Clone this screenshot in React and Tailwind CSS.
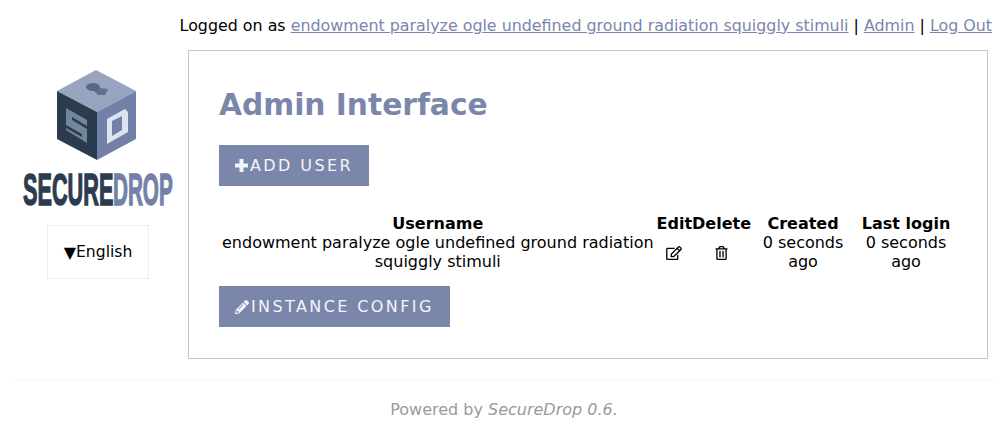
import React from 'react';
import { FaPencilAlt, FaRegEdit, FaRegTrashAlt } from 'react-icons/fa';

const linkClass = 'text-[#7b86ab] underline';

const Logo = () => (
    <svg width="152" height="138" viewBox="0 0 152 138" className="block overflow-visible">
        {/* cube */}
        <polygon points="74,1 114,22 75,43 35,22" fill="#97a3bf" />
        <polygon points="35,22 75,43 75,91 35,70" fill="#2a3c4e" />
        <polygon points="75,43 114,22 114,70 75,91" fill="#7381a8" />
        {/* keyhole */}
        <polygon points="68,18 78,19 86,20 83,26 76,26 72,22" fill="#5e6f8f" />
        <ellipse cx="71" cy="18" rx="7" ry="4" fill="#56678a" />
        {/* S face */}
        <polygon points="44,39 65,51 65,74 44,61" fill="#71879c" />
        <polygon points="50,48 65,57 65,60 50,51" fill="#2a3c4e" />
        <polygon points="44,56 60,65 60,68 44,59" fill="#2a3c4e" />
        {/* D face */}
        <polygon points="85,50 103,40 106,43 106,63 85,75" fill="#dde3f0" />
        <polygon points="90,52 100,47 100,61 90,67" fill="#7381a8" />
        {/* wordmark */}
        <text transform="translate(1 136) scale(0.493 1)" fontFamily="'Liberation Sans', sans-serif" fontWeight="700" fontSize="44" fill="#2a3c4e" stroke="#2a3c4e" strokeWidth="1.4">SECURE</text>
        <text transform="translate(91 136) scale(0.47 1)" fontFamily="'Liberation Sans', sans-serif" fontWeight="700" fontSize="44" fill="#7381a8" stroke="#7381a8" strokeWidth="1.4">DROP</text>
    </svg>
);

const PlusIcon = () => (
    <svg width="13" height="13" viewBox="0 0 13 13" className="mr-[2px]">
        <path d="M4.5 0h4v4.5H13v4H8.5V13h-4V8.5H0v-4h4.5z" fill="currentColor" />
    </svg>
);

const AdminButton = ({ icon, label }) => (
    <a className="flex w-fit items-center h-[41px] px-4 bg-[#7b86ab] text-[#f4f5f8] text-[16px] tracking-[2.4px] uppercase">
        {icon}
        {label}
    </a>
);

const App = () => {
    return (
        <div className="w-[1008px] h-[434px] overflow-hidden bg-white text-black text-[16px] leading-[19px] font-['DejaVu_Sans',sans-serif]">
            <div className="h-[50px] pt-4 pr-4 text-right text-[15.86px] whitespace-nowrap">
                Logged on as <a className={linkClass}>endowment paralyze ogle undefined ground radiation squiggly stimuli</a> | <a className={linkClass}>Admin</a> | <a className={linkClass}>Log Out</a>
            </div>
            <div className="flex">
                <div className="w-[188px] shrink-0 flex flex-col items-center pt-[19px]">
                    <div className="ml-[8px]">
                        <Logo />
                    </div>
                    <div className="mt-[18px] ml-[8px] w-[102px] h-[54px] border border-[#eeeeee] flex items-center justify-center text-[15.6px]">
                        <span className="text-[16px]">▼</span>English
                    </div>
                </div>
                <div className="w-[800px] h-[309px] border border-[#c4c4c4] pt-[35px] px-[30px]">
                    <h1 className="text-[29.7px] leading-[38px] font-bold text-[#7b86ab]">Admin Interface</h1>
                    <div className="mt-[21px]">
                        <AdminButton icon={<PlusIcon />} label="Add User" />
                    </div>
                    <table className="mt-[28px] w-[738px] border-collapse text-center">
                        <thead>
                            <tr className="font-bold">
                                <th className="w-[438px] px-[3px]">Username</th>
                                <th>Edit</th>
                                <th>Delete</th>
                                <th className="w-[104px]">Created</th>
                                <th className="w-[102px]">Last login</th>
                            </tr>
                        </thead>
                        <tbody>
                            <tr>
                                <td className="px-[3px]">endowment paralyze ogle undefined ground radiation squiggly stimuli</td>
                                <td><FaRegEdit className="inline w-[16px] h-[14px]" /></td>
                                <td><FaRegTrashAlt className="inline w-[13px] h-[14px]" /></td>
                                <td className="px-2">0 seconds ago</td>
                                <td className="px-2">0 seconds ago</td>
                            </tr>
                        </tbody>
                    </table>
                    <div className="mt-[15px]">
                        <AdminButton icon={<FaPencilAlt className="w-[14px] h-[14px] mr-[2px]" />} label="Instance Config" />
                    </div>
                </div>
            </div>
            <div className="mt-5 ml-[14px] w-[980px] border-t border-dotted border-[#eeeeee] pt-[20px] text-center text-[#9a9a9a]">
                Powered by <em>SecureDrop 0.6.</em>
            </div>
        </div>
    );
};

export default App;
